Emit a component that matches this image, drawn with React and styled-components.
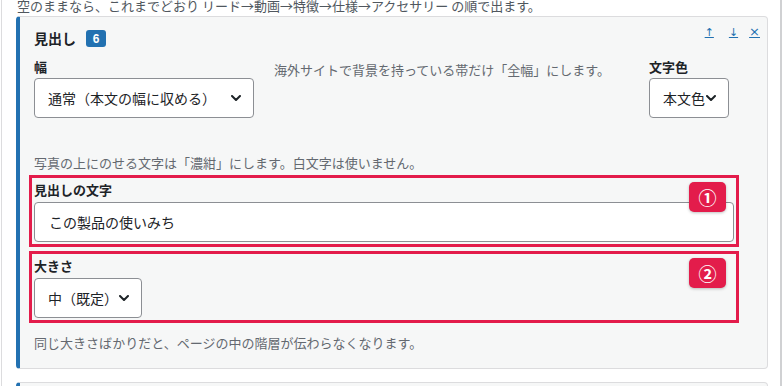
import React from 'react';
import styled, { createGlobalStyle } from 'styled-components';

const GlobalStyle = createGlobalStyle`
  html, body {
    margin: 0;
    padding: 0;
    background: #fff;
    overflow: hidden;
  }
  body {
    font-family: "Noto Sans CJK JP", "Noto Sans", sans-serif;
    font-size: 13px;
    color: #1d2327;
  }
`;

const Frame = styled.div`
  box-sizing: border-box;
  margin-left: 1px;
  width: 781px;
  min-height: 400px;
  padding: 0 12px 0 14px;
  border-left: 1px solid #dcdcde;
  border-right: 2px solid #d0d1d3;
`;

const Notice = styled.p`
  margin: -4px 0 0;
  padding-left: 1px;
  line-height: 20px;
  color: #50575e;
`;

const Card = styled.section`
  box-sizing: border-box;
  margin-top: ${p => p.$first ? '0' : '13px'};
  padding: 7px 7px 16px 14px;
  background: #f6f7f7;
  border: 1px solid #dcdcde;
  border-left: 4px solid #2271b1;
  border-radius: 4px;
  min-height: 40px;
`;

const Header = styled.div`
  display: flex;
  justify-content: space-between;
  align-items: flex-start;
`;

const TitleGroup = styled.div`
  display: flex;
  align-items: center;
  gap: 10px;
  margin-top: 6px;
  height: 17px;
`;

const Title = styled.h3`
  margin: 0;
  font-size: 14px;
  line-height: 17px;
  font-weight: 700;
`;

const Count = styled.span`
  display: inline-flex;
  align-items: center;
  justify-content: center;
  width: 20px;
  height: 17px;
  border-radius: 3px;
  background: #2271b1;
  color: #fff;
  font-family: "Liberation Sans", sans-serif;
  font-size: 12px;
  font-weight: 700;
`;

const Actions = styled.div`
  display: flex;
  align-items: baseline;
  gap: 11px;
  line-height: 16px;
`;

const ActionLink = styled.a`
  color: #2271b1;
  font-family: "DejaVu Sans", sans-serif;
  font-size: ${p => p.$size || 11}px;
  text-decoration: underline;
  cursor: pointer;
  margin-left: ${p => p.$before || 0}px;
`;

const Body = styled.div`
  width: 700px;
`;

const WidthRow = styled.div`
  display: grid;
  grid-template-columns: 220px 1fr 85px;
  column-gap: 20px;
  margin-top: 11px;
`;

const Field = styled.div`
  display: flex;
  flex-direction: column;
  align-items: flex-start;
`;

const Label = styled.label`
  display: block;
  font-size: 13px;
  font-weight: 700;
  line-height: 18px;
  margin-bottom: ${p => p.$gap ?? 2}px;
`;

const Help = styled.p`
  margin: ${p => p.$top || 0}px 0 0;
  padding-top: ${p => p.$pad || 0}px;
  color: #646970;
  font-size: 13px;
  line-height: 18px;
`;

const Select = styled.div`
  box-sizing: border-box;
  display: flex;
  align-items: center;
  justify-content: space-between;
  width: ${p => p.$width}px;
  height: 40px;
  padding: 0 12px 0 13px;
  background: #fff;
  border: 1px solid #8c8f94;
  border-radius: 4px;
  font-size: 14px;
  color: #1d2327;
  line-height: 1;
`;

const TextInput = styled.div`
  box-sizing: border-box;
  display: flex;
  align-items: center;
  width: 100%;
  height: 40px;
  padding: 0 14px;
  background: #fff;
  border: 1px solid #8c8f94;
  border-radius: 4px;
  font-size: 14px;
  color: #1d2327;
`;

const Marked = styled.div`
  position: relative;
  box-sizing: border-box;
  margin: ${p => p.$top || 0}px -5px 0;
  padding: 3px 2px 2px;
  border: 3px solid #e31c4b;
`;

const Marker = styled.span`
  position: absolute;
  top: 4px;
  right: 10px;
  display: flex;
  align-items: center;
  justify-content: center;
  width: 37px;
  height: 30px;
  border-radius: 5px;
  background: #e31c4b;
  color: #fff;
  font-size: 18px;
  font-weight: 700;
  line-height: 1;
  box-shadow: 0 1px 3px rgba(0, 0, 0, 0.25);
`;

const Chevron = () => (
  <svg width="10" height="6" viewBox="0 0 10 6" fill="none">
    <path d="M1 1l4 4 4-4" stroke="#1d2327" strokeWidth="2" strokeLinecap="round" strokeLinejoin="round" />
  </svg>
);

export default function App() {
  return (
    <>
      <GlobalStyle />
      <Frame>
        <Notice>空のままなら、これまでどおり リード→動画→特徴→仕様→アクセサリー の順で出ます。</Notice>
        <Card $first>
          <Header>
            <TitleGroup>
              <Title>見出し</Title>
              <Count>6</Count>
            </TitleGroup>
            <Actions>
              <ActionLink>↑</ActionLink>
              <ActionLink $before={4}>↓</ActionLink>
              <ActionLink $size={13}>×</ActionLink>
            </Actions>
          </Header>
          <Body>
            <WidthRow>
              <Field>
                <Label>幅</Label>
                <Select $width={220}>通常（本文の幅に収める）<Chevron /></Select>
              </Field>
              <Help $pad={3}>海外サイトで背景を持っている帯だけ「全幅」にします。</Help>
              <Field>
                <Label>文字色</Label>
                <Select $width={80}>本文色<Chevron /></Select>
              </Field>
            </WidthRow>
            <Help $top={36}>写真の上にのせる文字は「濃紺」にします。白文字は使いません。</Help>
            <Marked $top={3}>
              <Label $gap={3}>見出しの文字</Label>
              <TextInput>この製品の使いみち</TextInput>
              <Marker>①</Marker>
            </Marked>
            <Marked $top={4}>
              <Label $gap={3}>大きさ</Label>
              <Select $width={108}>中（既定）<Chevron /></Select>
              <Marker>②</Marker>
            </Marked>
            <Help $top={11}>同じ大きさばかりだと、ページの中の階層が伝わらなくなります。</Help>
          </Body>
        </Card>
        <Card />
      </Frame>
    </>
  );
}
